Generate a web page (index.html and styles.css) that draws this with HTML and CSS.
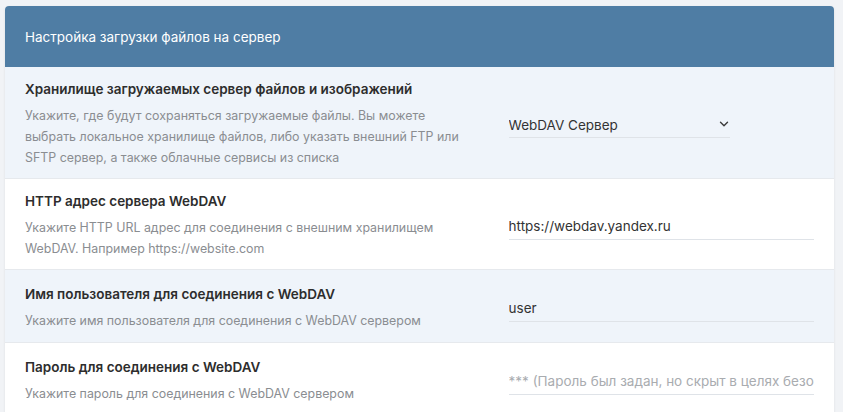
FILE: index.html
```html
<!DOCTYPE html>
<html lang="ru">
<head>
<meta charset="utf-8">
<title>Настройка загрузки файлов на сервер</title>
<link rel="stylesheet" href="styles.css">
</head>
<body>
<div class="panel">
  <div class="panel-header">Настройка загрузки файлов на сервер</div>
  <div class="row row-tint">
    <div class="label-col">
      <div class="title">Хранилище загружаемых сервер файлов и изображений</div>
      <div class="desc">Укажите, где будут сохраняться загружаемые файлы. Вы можете выбрать локальное хранилище файлов, либо указать внешний FTP или SFTP сервер, а также облачные сервисы из списка</div>
    </div>
    <div class="field-col">
      <div class="select-wrap">
        <select class="field select">
          <option>WebDAV Сервер</option>
        </select>
        <svg class="chevron" width="10" height="6" viewBox="0 0 10 6"><path d="M1.5 1.2l3.5 3.5 3.5-3.5" fill="none" stroke="#3a3a3a" stroke-width="1.4" stroke-linecap="round" stroke-linejoin="round"/></svg>
      </div>
    </div>
  </div>
  <div class="row">
    <div class="label-col">
      <div class="title">HTTP адрес сервера WebDAV</div>
      <div class="desc">Укажите HTTP URL адрес для соединения с внешним хранилищем WebDAV. Например https://website.com</div>
    </div>
    <div class="field-col">
      <input class="field" type="text" value="https://webdav.yandex.ru">
    </div>
  </div>
  <div class="row row-tint">
    <div class="label-col">
      <div class="title">Имя пользователя для соединения с WebDAV</div>
      <div class="desc">Укажите имя пользователя для соединения с WebDAV сервером</div>
    </div>
    <div class="field-col">
      <input class="field" type="text" value="user">
    </div>
  </div>
  <div class="row">
    <div class="label-col">
      <div class="title">Пароль для соединения с WebDAV</div>
      <div class="desc">Укажите пароль для соединения с WebDAV сервером</div>
    </div>
    <div class="field-col">
      <input class="field" type="password" placeholder="*** (Пароль был задан, но скрыт в целях безопасности)">
    </div>
  </div>
</div>
</body>
</html>
```
FILE: styles.css
```css
html, body {
  margin: 0;
  padding: 0;
}
body {
  background: #f1f3f6;
  padding: 6px 9px 0 5px;
  font-family: "Inter", "Liberation Sans", sans-serif;
  color: #333;
  overflow: hidden;
}
.panel {
  background: #fff;
  border-radius: 4px 4px 0 0;
  box-shadow: 0 1px 3px rgba(0, 0, 0, 0.08);
}
.panel-header {
  background: #4f7da4;
  color: #fff;
  height: 61px;
  display: flex;
  align-items: center;
  padding: 0 20px;
  font-size: 13.5px;
  border-radius: 4px 4px 0 0;
}
.row {
  display: grid;
  grid-template-columns: 7fr 5fr;
  align-items: center;
  min-height: 73px;
  box-sizing: border-box;
  padding: 12px 0 10px;
  border-top: 1px solid #e6e9ed;
  background: #fff;
}
.panel-header + .row {
  border-top: none;
}
.row-tint {
  background: #eff4fa;
}
.label-col,
.field-col {
  padding: 0 20px;
}
.title {
  font-size: 13.5px;
  font-weight: 600;
  line-height: 20px;
  color: #2d2d2d;
}
.desc {
  margin-top: 6px;
  font-size: 12.4px;
  line-height: 21px;
  color: #8a8d91;
}
.field {
  display: block;
  width: 100%;
  box-sizing: border-box;
  height: 29px;
  padding: 3px 0 0 0;
  margin: 0;
  border: none;
  border-bottom: 1px solid #dfe3e8;
  background: transparent;
  font-family: inherit;
  font-size: 13.5px;
  color: #333;
  outline: none;
  border-radius: 0;
}
.field::placeholder {
  color: #a9acb0;
}
.select-wrap {
  position: relative;
  width: 221px;
}
.select {
  appearance: none;
  -webkit-appearance: none;
  padding-right: 20px;
}
.chevron {
  position: absolute;
  right: 1px;
  top: 12px;
  pointer-events: none;
}
```
